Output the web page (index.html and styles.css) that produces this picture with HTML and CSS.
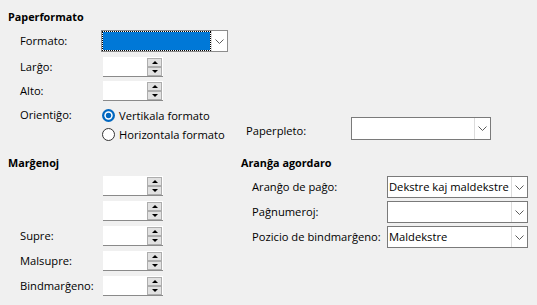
FILE: index.html
```html
<!DOCTYPE html>
<html>
<head>
<meta charset="utf-8">
<link rel="stylesheet" href="styles.css">
</head>
<body>
<div class="page">
  <section class="paper">
    <h2 class="head">Paperformato</h2>
    <div class="row r-format">
      <span class="lbl">Formato:</span>
      <div class="combo combo-format focus">
        <div class="combo-val sel"></div>
        <div class="combo-btn"><svg width="9" height="5" viewBox="0 0 9 5"><polyline points="0.5,0.5 4.5,4.5 8.5,0.5" fill="none" stroke="#5c5c5c" stroke-width="1"/></svg></div>
      </div>
    </div>
    <div class="row r-spin r-first">
      <span class="lbl">Larĝo:</span>
      <div class="spin"><div class="btns"><div class="sb up"></div><div class="sb down"></div></div></div>
    </div>
    <div class="row r-spin r-second">
      <span class="lbl">Alto:</span>
      <div class="spin"><div class="btns"><div class="sb up"></div><div class="sb down"></div></div></div>
    </div>
    <div class="orient">
      <span class="lbl lbl-orient">Orientiĝo:</span>
      <div class="radios">
        <label class="radio"><svg width="13" height="13" viewBox="0 0 13 13"><circle cx="6.5" cy="6.5" r="6.5" fill="#0067c0"/><circle cx="6.5" cy="6.5" r="4.2" fill="#fff"/><circle cx="6.5" cy="6.5" r="2.7" fill="#0067c0"/></svg><span>Vertikala formato</span></label>
        <label class="radio"><svg width="13" height="13" viewBox="0 0 13 13"><circle cx="6.5" cy="6.5" r="6" fill="#fff" stroke="#333" stroke-width="1"/></svg><span>Horizontala formato</span></label>
      </div>
      <div class="tray">
        <span class="lbl-tray">Paperpleto:</span>
        <div class="combo combo-tray">
          <div class="combo-val"></div>
          <div class="combo-btn"><svg width="9" height="5" viewBox="0 0 9 5"><polyline points="0.5,0.5 4.5,4.5 8.5,0.5" fill="none" stroke="#5c5c5c" stroke-width="1"/></svg></div>
        </div>
      </div>
    </div>
  </section>

  <div class="lower">
    <section class="margins">
      <h2 class="head">Marĝenoj</h2>
      <div class="mrows">
        <div class="row r-spin"><span class="lbl"></span><div class="spin"><div class="btns"><div class="sb up"></div><div class="sb down"></div></div></div></div>
        <div class="row r-spin"><span class="lbl"></span><div class="spin"><div class="btns"><div class="sb up"></div><div class="sb down"></div></div></div></div>
        <div class="row r-spin"><span class="lbl">Supre:</span><div class="spin"><div class="btns"><div class="sb up"></div><div class="sb down"></div></div></div></div>
        <div class="row r-spin"><span class="lbl">Malsupre:</span><div class="spin"><div class="btns"><div class="sb up"></div><div class="sb down"></div></div></div></div>
        <div class="row r-spin"><span class="lbl">Bindmarĝeno:</span><div class="spin"><div class="btns"><div class="sb up"></div><div class="sb down"></div></div></div></div>
      </div>
    </section>
    <section class="layout">
      <h2 class="head">Aranĝa agordaro</h2>
      <div class="lrows">
        <div class="lrow">
          <span class="llbl">Aranĝo de paĝo:</span>
          <div class="combo combo-layout"><div class="combo-val">Dekstre kaj maldekstre</div><div class="combo-btn"><svg width="9" height="5" viewBox="0 0 9 5"><polyline points="0.5,0.5 4.5,4.5 8.5,0.5" fill="none" stroke="#5c5c5c" stroke-width="1"/></svg></div></div>
        </div>
        <div class="lrow">
          <span class="llbl">Paĝnumeroj:</span>
          <div class="combo combo-layout"><div class="combo-val"></div><div class="combo-btn"><svg width="9" height="5" viewBox="0 0 9 5"><polyline points="0.5,0.5 4.5,4.5 8.5,0.5" fill="none" stroke="#5c5c5c" stroke-width="1"/></svg></div></div>
        </div>
        <div class="lrow">
          <span class="llbl">Pozicio de bindmarĝeno:</span>
          <div class="combo combo-layout"><div class="combo-val">Maldekstre</div><div class="combo-btn"><svg width="9" height="5" viewBox="0 0 9 5"><polyline points="0.5,0.5 4.5,4.5 8.5,0.5" fill="none" stroke="#5c5c5c" stroke-width="1"/></svg></div></div>
        </div>
      </div>
    </section>
  </div>
</div>
</body>
</html>
```
FILE: styles.css
```css
html, body {
  margin: 0;
  padding: 0;
  background: #f0f0f0;
}
body {
  width: 537px;
  height: 305px;
  overflow: hidden;
  font-family: "Open Sans", "Noto Sans", sans-serif;
  font-size: 11.2px;
  color: #000;
}
.page {
  padding: 9px 0 0 8px;
}
.head {
  margin: 0;
  font-size: 10.8px;
  font-weight: 700;
  line-height: 16px;
  height: 16px;
}
.row {
  display: flex;
  align-items: center;
  padding-left: 12px;
}
.lbl {
  width: 81px;
  flex: none;
  line-height: 16px;
  white-space: nowrap;
}
.r-format {
  margin-top: 5px;
  height: 22px;
}
.r-spin {
  height: 20px;
}
.r-first {
  margin-top: 5px;
}
.r-second {
  margin-top: 4px;
}
.spin {
  width: 60px;
  height: 19px;
  margin-left: 2px;
  background: #fff;
  border-bottom: 1px solid #8a8a8a;
  display: flex;
  justify-content: flex-end;
  align-items: flex-start;
  box-sizing: content-box;
}
.btns {
  width: 15px;
  margin-top: 1px;
  margin-right: 1px;
  display: flex;
  flex-direction: column;
  gap: 0;
}
.sb {
  background: #e1e1e1;
  border: 1px solid #adadad;
  box-sizing: border-box;
  height: 9px;
  display: flex;
  align-items: center;
  justify-content: center;
}
.sb.up::before {
  content: "";
  border-left: 3px solid transparent;
  border-right: 3px solid transparent;
  border-bottom: 3px solid #000;
}
.sb.down::before {
  content: "";
  border-left: 3px solid transparent;
  border-right: 3px solid transparent;
  border-top: 3px solid #000;
}
.combo {
  display: flex;
  background: #fff;
  border: 1px solid #7a7a7a;
  box-sizing: border-box;
  height: 22px;
}
.combo-format {
  width: 127px;
  border-color: #8c8c8c;
}
.combo-val {
  flex: 1;
  min-width: 0;
  line-height: 20px;
  padding-left: 1px;
  white-space: nowrap;
  overflow: hidden;
}
.combo-val.sel {
  background: #0078d7;
  background-clip: padding-box;
  border: 1px dotted #000;
}
.combo-btn {
  width: 16px;
  flex: none;
  border-left: 1px solid #dcdcdc;
  display: flex;
  align-items: center;
  justify-content: center;
  box-sizing: border-box;
}
.orient {
  display: flex;
  padding-left: 12px;
  margin-top: 5px;
}
.lbl-orient {
  padding-top: 1px;
}
.radios {
  width: 145px;
  flex: none;
  display: flex;
  flex-direction: column;
}
.radio {
  display: flex;
  align-items: center;
  height: 19px;
  gap: 4px;
  padding-left: 1px;
  white-space: nowrap;
}
.radio svg {
  flex: none;
}
.tray {
  display: flex;
  align-items: center;
  margin-top: 11px;
  height: 23px;
}
.lbl-tray {
  width: 105px;
  flex: none;
  padding-top: 3px;
  white-space: nowrap;
}
.combo-tray {
  width: 140px;
  height: 23px;
}
.lower {
  display: flex;
  margin-top: 11px;
}
.margins {
  width: 233px;
  flex: none;
}
.mrows {
  margin-top: 5px;
  display: flex;
  flex-direction: column;
  gap: 5px;
}
.layout {
  flex: none;
}
.lrows {
  margin-top: 5px;
  display: flex;
  flex-direction: column;
  gap: 3px;
  padding-left: 11px;
}
.lrow {
  display: flex;
  align-items: center;
  height: 22px;
}
.llbl {
  width: 135px;
  flex: none;
  line-height: 16px;
  white-space: nowrap;
}
.combo-layout {
  width: 141px;
}
```
